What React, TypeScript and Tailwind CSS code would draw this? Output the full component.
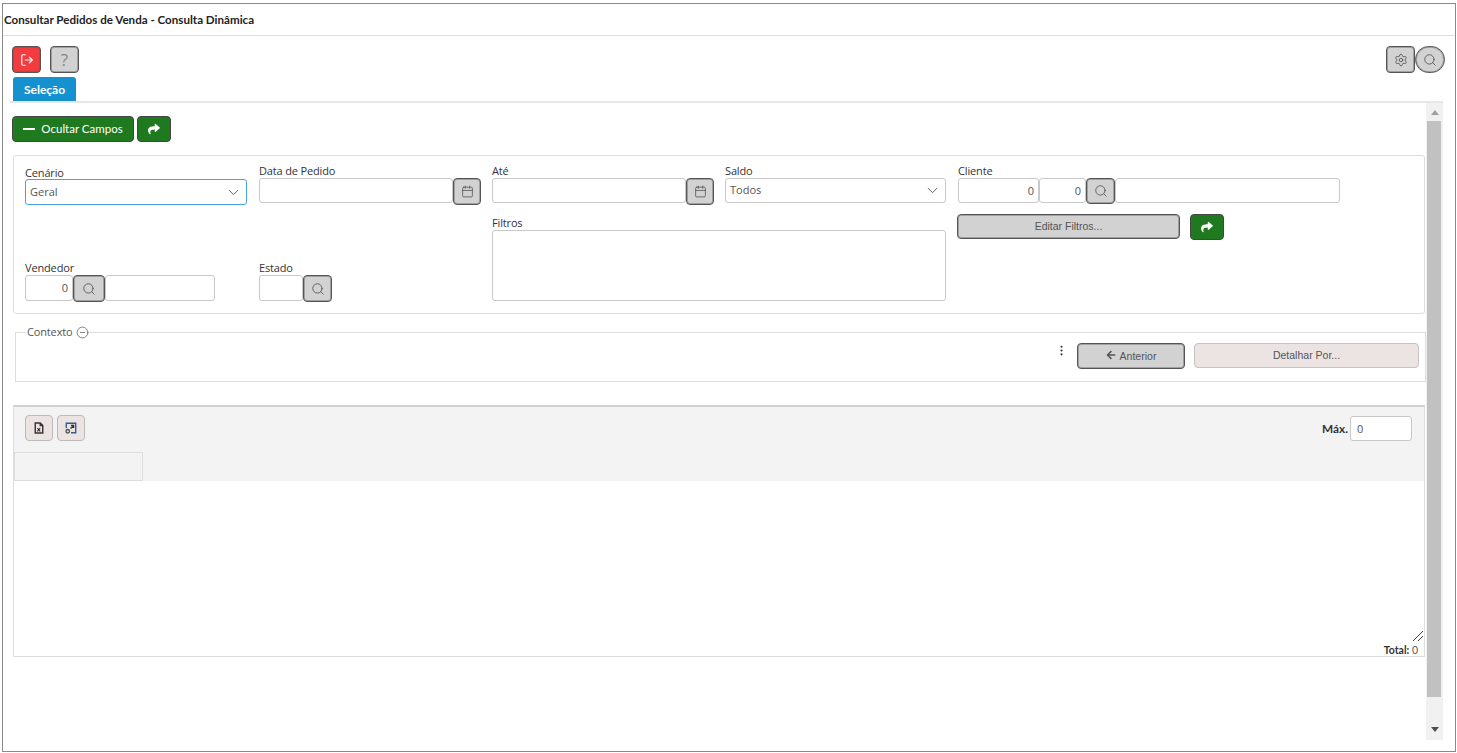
import { Calendar, ChevronDown, CircleMinus, EllipsisVertical, LogOut, Search, Settings } from "lucide-react"
import { FaArrowLeft, FaShare } from "react-icons/fa"

const labelClass = "block text-[11px] leading-[14px] tracking-[-0.15px] text-[#333] font-['Open_Sans',sans-serif]"
const inputClass = "h-[25px] rounded-[3px] border border-[#c8c8c8] bg-white text-[11px] text-[#555]"
const grayBtn =
  "flex items-center justify-center rounded-[4px] border border-[#555] bg-[#d2d2d2] text-[#555] shadow-[inset_0_0_0_1px_#a0a0a0]"

function LookupButton({ className = "w-[32px] h-[27px]" }: { className?: string }) {
  return (
    <button className={`${grayBtn} ${className} shrink-0`}>
      <Search size={14} strokeWidth={1.5} />
    </button>
  )
}

function DateField({ label }: { label: string }) {
  return (
    <div className="w-[222px]">
      <label className={labelClass}>{label}</label>
      <div className="flex">
        <div className={`${inputClass} flex-1`} />
        <button className={`${grayBtn} h-[27px] w-[28px] shrink-0`}>
          <Calendar size={13} strokeWidth={1.5} />
        </button>
      </div>
    </div>
  )
}

function ShareButton({ className = "" }: { className?: string }) {
  return (
    <button className={`flex h-[26px] items-center justify-center rounded-[4px] border border-[#444] bg-[#1f7a1f] text-white ${className}`}>
      <FaShare size={12} />
    </button>
  )
}

function ExcelIcon() {
  return (
    <svg width="10" height="12" viewBox="0 0 12 14" fill="none" stroke="#333" strokeWidth="1.7">
      <path d="M1.5 1h6l3 3v9h-9z" fill="#f1e4e4" />
      <path d="M7.5 1v3h3" />
      <path d="M4 7l3.5 4M7.5 7L4 11" stroke="#222" strokeWidth="1.3" />
    </svg>
  )
}

function ExpandIcon() {
  return (
    <svg width="12" height="12" viewBox="0 0 14 14" fill="none" strokeWidth="1.6">
      <path d="M1.5 7V1.5h11v11H7" stroke="#2f5f8f" />
      <path d="M6.5 7.5L10 4M7 4h3v3" stroke="#333" />
      <circle cx="3.2" cy="10.8" r="2" stroke="#555" />
    </svg>
  )
}

export default function App() {
  return (
    <div className="h-[753px] w-[1457px] overflow-hidden bg-white pl-[2px] pr-[1px] pt-[3px] font-['Open_Sans',sans-serif]">
      <div className="flex h-[749px] w-[1454px] flex-col border border-[#8a8a8a]">
        <div className="flex h-[32px] shrink-0 items-center border-b border-[#ddd] pl-[1px] pt-[1px] font-['Lato',sans-serif] text-[11.6px] font-bold text-[#222]">
          Consultar Pedidos de Venda - Consulta Dinâmica
        </div>

        <div className="flex items-start justify-between pl-[9px] pr-[10px] pt-[10px]">
          <div className="flex gap-[9px]">
            <button className="flex h-[27px] w-[29px] items-center justify-center rounded-[4px] border border-[#555] bg-[#f23c40] text-white shadow-[inset_0_0_0_1px_#b04a4a]">
              <LogOut size={14} strokeWidth={2} />
            </button>
            <button className={`${grayBtn} h-[27px] w-[29px] text-[17px] !text-[#888]`}>?</button>
          </div>
          <div className="flex">
            <button className={`${grayBtn} h-[27px] w-[29px]`}>
              <Settings size={14} strokeWidth={1.5} />
            </button>
            <button className="flex h-[27px] w-[30px] items-center justify-center rounded-full border border-[#555] bg-[#d2d2d2] text-[#555] shadow-[inset_0_0_0_1px_#a0a0a0]">
              <Search size={14} strokeWidth={1.5} />
            </button>
          </div>
        </div>

        <div className="mx-[7px] mt-[4px] w-[1433px] border-b-2 border-[#e6e6e6] pl-[3px]">
          <div className="flex h-[24px] w-[63px] items-center justify-center rounded-t-[3px] bg-[#1591d0] pt-[1px] font-['Lato',sans-serif] text-[12px] font-bold text-white">
            Seleção
          </div>
        </div>

        <div className="ml-[7px] flex h-[637px] w-[1433px]">
          <div className="w-[1416px] shrink-0">
            <div className="ml-[2px] mt-[13px] flex gap-[3px]">
              <button className="flex h-[26px] w-[122px] items-center justify-center gap-[6px] rounded-[4px] border border-[#444] bg-[#1f7a1f] font-['Lato',sans-serif] text-[11.5px] text-white">
                <span className="h-[1.5px] w-[12px] bg-white" />
                Ocultar Campos
              </button>
              <ShareButton className="w-[34px]" />
            </div>

            <div className="ml-[3px] mt-[13px] grid h-[159px] w-[1412px] grid-cols-[234px_233px_233px_233px_1fr] grid-rows-[52px_1fr] rounded-[3px] border border-[#ddd] pb-[11px] pl-[11px] pt-[8px]">
              <div className="w-[222px] pt-[2px]">
                <label className={labelClass}>Cenário</label>
                <div className="-mt-[1px] flex h-[26px] items-center justify-between rounded-[3px] border border-[#4aa3d8] bg-white pl-[4px] pr-[4px] text-[11px] text-[#555]">
                  Geral
                  <ChevronDown size={17} strokeWidth={1.3} />
                </div>
              </div>
              <DateField label="Data de Pedido" />
              <DateField label="Até" />
              <div className="w-[221px]">
                <label className={labelClass}>Saldo</label>
                <div className={`${inputClass} flex items-center justify-between pl-[4px] pr-[4px]`}>
                  Todos
                  <ChevronDown size={17} strokeWidth={1.3} />
                </div>
              </div>
              <div>
                <label className={labelClass}>Cliente</label>
                <div className="flex w-[382px]">
                  <div className={`${inputClass} w-[81px] pr-[4px] pt-[4px] text-right`}>0</div>
                  <div className={`${inputClass} w-[47px] pr-[4px] pt-[4px] text-right`}>0</div>
                  <LookupButton className="h-[26px] w-[29px]" />
                  <div className={`${inputClass} flex-1`} />
                </div>
              </div>

              <div className="self-end pt-[2px]">
                <label className={labelClass}>Vendedor</label>
                <div className="flex w-[190px]">
                  <div className={`${inputClass} !h-[26px] w-[48px] pr-[4px] pt-[4px] text-right`}>0</div>
                  <LookupButton />
                  <div className={`${inputClass} !h-[26px] flex-1`} />
                </div>
              </div>
              <div className="self-end">
                <label className={labelClass}>Estado</label>
                <div className="flex">
                  <div className={`${inputClass} !h-[26px] w-[44px]`} />
                  <LookupButton className="h-[27px] w-[29px]" />
                </div>
              </div>
              <div className="col-span-2">
                <label className={labelClass}>Filtros</label>
                <div className="h-[71px] w-[454px] rounded-[3px] border border-[#c8c8c8] bg-white" />
              </div>
              <div className="-ml-[1px] -mt-[2px] flex items-start gap-[10px]">
                <button className="h-[25px] w-[223px] rounded-[4px] border border-[#555] bg-[#d2d2d2] font-['Liberation_Sans',sans-serif] text-[10.5px] text-[#555] shadow-[inset_0_0_0_1px_#a0a0a0]">
                  Editar Filtros...
                </button>
                <ShareButton className="w-[34px]" />
              </div>
            </div>

            <fieldset className="ml-[5px] mt-[10px] h-[58px] w-[1411px] border border-[#ddd] pl-[10px] pr-[6px]">
              <legend className="flex items-center gap-[3px] px-[1px] text-[11px] leading-[16px] tracking-[-0.15px] text-[#555]">
                Contexto
                <CircleMinus size={13} strokeWidth={1.2} className="text-[#444]" />
              </legend>
              <div className="mt-[3px] flex items-start justify-end">
                <EllipsisVertical size={13} className="mr-[9px] mt-[1px] text-[#333]" />
                <button className={`${grayBtn} mr-[9px] h-[26px] w-[108px] gap-[4px] font-['Liberation_Sans',sans-serif] text-[10.5px]`}>
                  <FaArrowLeft size={10} className="-mt-[2px]" />
                  <span className="pt-[2px]">Anterior</span>
                </button>
                <button className="h-[25px] w-[225px] rounded-[4px] border border-[#c4c4c4] bg-[#ece3e3] font-['Liberation_Sans',sans-serif] text-[10.5px] text-[#555]">
                  Detalhar Por...
                </button>
              </div>
            </fieldset>

            <div className="ml-[3px] mt-[23px] flex h-[252px] w-[1412px] flex-col border border-t-2 border-[#ddd] border-t-[#d0d0d0]">
              <div className="h-[74px] shrink-0 bg-[#f3f3f3]">
                <div className="flex h-[45px] items-start justify-between pl-[11px] pr-[12px] pt-[8px]">
                  <div className="flex gap-[4px]">
                    <button className="flex h-[26px] w-[28px] items-center justify-center rounded-[4px] border border-[#bbb] bg-[#ece3e3]">
                      <ExcelIcon />
                    </button>
                    <button className="flex h-[26px] w-[28px] items-center justify-center rounded-[4px] border border-[#bbb] bg-[#ece3e3]">
                      <ExpandIcon />
                    </button>
                  </div>
                  <div className="flex items-center gap-[2px] pt-[1px]">
                    <span className="font-['Lato',sans-serif] text-[11.8px] font-bold text-[#333]">Máx.</span>
                    <div className={`${inputClass} w-[62px] pl-[6px] pt-[4px]`}>0</div>
                  </div>
                </div>
                <div className="h-[29px] w-[129px] border border-[#ddd] bg-[#f3f3f3]" />
              </div>
              <div className="relative flex-1 bg-white">
                <svg className="absolute right-[1px] top-[150px]" width="10" height="10" viewBox="0 0 10 10" stroke="#444" strokeWidth="1">
                  <path d="M0 10L10 0M5 10L10 5" />
                </svg>
                <div className="absolute bottom-0 right-[6px] font-['Lato',sans-serif] text-[10.5px] leading-[12px] text-[#555]">
                  <b className="text-[#333]">Total:</b> 0
                </div>
              </div>
            </div>
          </div>

          <div className="flex w-[17px] flex-col items-center bg-[#f1f1f1]">
            <div className="flex h-[18px] items-center justify-center">
              <div className="h-0 w-0 border-x-[4px] border-b-[5px] border-x-transparent border-b-[#a0a0a0]" />
            </div>
            <div className="-ml-[2px] h-[576px] w-[14px] bg-[#c1c1c1]" />
            <div className="flex flex-1 items-end justify-center pb-[8px]">
              <div className="h-0 w-0 border-x-[4px] border-t-[5px] border-x-transparent border-t-[#505050]" />
            </div>
          </div>
        </div>
      </div>
    </div>
  )
}
